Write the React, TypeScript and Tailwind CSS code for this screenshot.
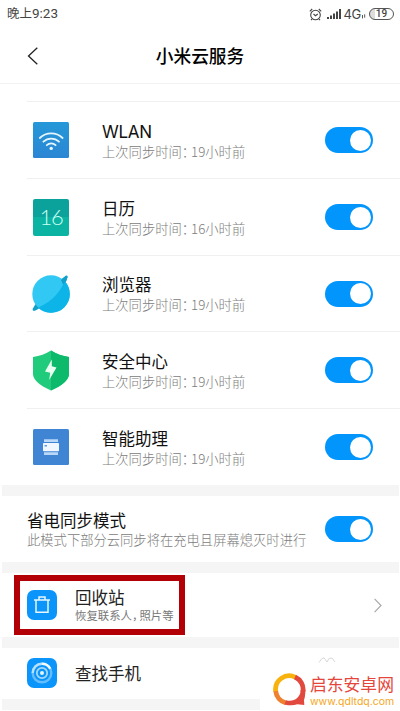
import type { ReactNode } from 'react';

const CJK = "font-['Noto_Sans_CJK_SC',sans-serif]";

function Toggle() {
  return (
    <div className="mr-[27px] flex h-[26px] w-[48px] shrink-0 items-center justify-end rounded-full bg-[#0295fc] pr-[2px]">
      <div className="h-[21px] w-[21px] rounded-full bg-white" />
    </div>
  );
}

function WlanIcon() {
  return (
    <svg width="36" height="36" viewBox="0 0 36 36" fill="none">
      <defs>
        <linearGradient id="wlan" x1="0" y1="0" x2="0" y2="1">
          <stop offset="0" stopColor="#2598d8" />
          <stop offset="1" stopColor="#2b86d4" />
        </linearGradient>
      </defs>
      <rect width="36" height="36" rx="1.5" fill="url(#wlan)" />
      <g stroke="#e6f6ff" strokeWidth="1.8" strokeLinecap="round">
        <path d="M6.800 16a16.500 16.500 0 0 1 22.800 0" />
        <path d="M10.400 19.700a11.200 11.200 0 0 1 15.600 0" />
        <path d="M13.800 23.200a6.400 6.400 0 0 1 8.800 0" />
      </g>
      <circle cx="18.200" cy="26.400" r="1.700" fill="#e6f6ff" />
    </svg>
  );
}

function CalendarIcon() {
  return (
    <div className="flex h-[37px] w-[36px] items-center justify-center rounded-[2px] bg-linear-to-b from-[#0aa29a] from-50% to-[#0bb3a2] to-50%">
      <span className="font-['Lato',sans-serif] text-[22px] leading-none font-light tracking-[-1.2px] text-[#c8fff5]">16</span>
    </div>
  );
}

function BrowserIcon() {
  return (
    <svg width="38" height="38" viewBox="0 0 38 38">
      <path d="M29 4.500 34 .6Q35.800 0 35.600 2 35 6 32 10ZM3.500 29 .6 34Q.2 36.300 3 35.600 6 34.500 8 32.500Z" fill="#0fa3cf" />
      <circle cx="19" cy="19" r="18.700" fill="#32c8f4" />
      <path d="M32.300 5.700A18.700 18.700 0 0 1 6 32.400Q17 28 24 20T32.300 5.700Z" fill="#0cb4e8" />
      <path d="M29 5 34 1.200Q35.800.4 35.400 2.500 34.500 6 31 9.500ZM3.800 30.200 1 34.500Q.8 36 3 35.400L6.600 33.300Z" fill="#139fc9" />
    </svg>
  );
}

function SecurityIcon() {
  return (
    <svg width="36" height="41" viewBox="0 0 36 41">
      <path d="M18 .5Q26 5.500 36 7v17.500Q35 33 18 40.500 1 33 0 24.500V7Q10 5.500 18 .5Z" fill="#20cc7c" />
      <path d="M18 .5Q26 5.500 36 7v17.500Q35 33 18 40.500Z" fill="#0dba6c" />
      <path d="M18.800 9.500 12 21.500l5.200 1.200-1 7.300 7.300-12.500-4.700-1.200Z" fill="#e9fff1" />
    </svg>
  );
}

function AssistantIcon() {
  return (
    <svg width="36" height="36" viewBox="0 0 36 36">
      <rect width="36" height="36" rx="1.500" fill="#4084d4" />
      <path d="M11 10.300h14v2.600H11zM11 23.300h14v2.600H11z" fill="#b9d8f7" />
      <rect x="10" y="14" width="16" height="8.200" rx=".8" fill="#f0f7ff" />
      <path d="M11.500 16.200h2.500v1.200h-2.500z" fill="#4084d4" />
    </svg>
  );
}

function SyncTime({ hours }: { hours: string }) {
  return (
    <div className="mt-[1px] text-[13.3px] leading-[18px] font-light text-[#7c7c7c]">
      上次同步时间<span className="tracking-[-4px]">：</span>{hours}小时前
    </div>
  );
}

interface AppRow {
  title: string;
  hours: string;
  icon: ReactNode;
  height: string;
}

const rows: AppRow[] = [
  { title: 'WLAN', hours: '19', icon: <WlanIcon />, height: 'h-[77px]' },
  { title: '日历', hours: '16', icon: <CalendarIcon />, height: 'h-[77px]' },
  { title: '浏览器', hours: '19', icon: <BrowserIcon />, height: 'h-[76px]' },
  { title: '安全中心', hours: '19', icon: <SecurityIcon />, height: 'h-[77px]' },
  { title: '智能助理', hours: '19', icon: <AssistantIcon />, height: 'h-[77px]' },
];

function StatusBar() {
  return (
    <div className="flex h-[28px] items-center justify-between pr-[6px] pl-[7px] text-[#444]">
      <div className="text-[12.5px] leading-none">
        晚上<span className="font-['Roboto',sans-serif] text-[13.500px]">9:23</span>
      </div>
      <div className="flex items-center">
        <svg width="13" height="13" viewBox="0 0 13 13" fill="none" stroke="#444" strokeWidth="1.1">
          <circle cx="6.500" cy="7" r="4.800" />
          <path d="M.8 3.300 3.200 1M12.200 3.300 9.800 1M4.500 6l2 1.700L8.800 6M3 11l-1 1.200M10 11l1 1.200" />
        </svg>
        <svg className="ml-[5px]" width="14" height="11" viewBox="0 0 14 11" fill="#444">
          <path d="M0 8h2v2H0zM3 6.500h2V10H3zM6 4.500h2V10H6zM9 2.500h2V10H9zM12 0h2v10h-2z" />
        </svg>
        <span className="ml-[3px] font-['Inter',sans-serif] text-[13px] leading-none tracking-[-0.3px]">4G</span>
        <svg className="mt-[5px]" width="5" height="5" viewBox="0 0 5 5" stroke="#555" strokeWidth="1">
          <path d="M1.500 1v3.400M3.700.3v3.400" />
        </svg>
        <div className="ml-[3px] flex h-[12px] w-[25px] items-center justify-center rounded-full border border-[#555] bg-linear-to-r from-[#ddd] from-20% to-white to-20%">
          <span className="font-['Roboto',sans-serif] text-[10px] leading-none font-medium">19</span>
        </div>
      </div>
    </div>
  );
}

function Band() {
  return <div className="mr-[1px] ml-[2px] h-[11px] shrink-0 bg-[#f5f5f5]" />;
}

export default function App() {
  return (
    <div className={`${CJK} relative flex h-[711px] w-[400px] flex-col overflow-hidden bg-white text-[#111]`}>
      <StatusBar />
      <header className="flex h-[56px] shrink-0 items-center border-b border-[#f3f3f3]">
        <svg className="ml-[27px]" width="12" height="18" viewBox="0 0 12 18" fill="none" stroke="#222" strokeWidth="1.300">
          <path d="M10.300.8 1.500 9l8.800 8.200" />
        </svg>
        <h1 className="mr-[39px] flex-1 text-center text-[17.700px] leading-none font-medium text-black">小米云服务</h1>
      </header>

      <div className="mt-[17px] ml-[27px] shrink-0">
        {rows.map((row) => (
          <div key={row.title} className={`${row.height} flex shrink-0 items-center border-t border-[#f0f0f0]`}>
            <div className="ml-[4px] flex w-[40px] justify-center">{row.icon}</div>
            <div className="ml-[31px] flex-1 pt-[1px]">
              <div className={row.title === 'WLAN' ? "pt-[2px] font-['Inter',sans-serif] text-[17px] leading-[19px] tracking-[-0.3px]" : 'text-[16.500px] leading-[21px]'}>
                {row.title}
              </div>
              <SyncTime hours={row.hours} />
            </div>
            <Toggle />
          </div>
        ))}
      </div>

      <Band />
      <section className="flex h-[66px] shrink-0 items-center pl-[27px]">
        <div className="flex-1 whitespace-nowrap pt-[1px]">
          <div className="text-[16.500px] leading-[21px]">省电同步模式</div>
          <div className="text-[13.300px] leading-[18px] font-light text-[#7c7c7c]">此模式下部分云同步将在充电且屏幕熄灭时进行</div>
        </div>
        <Toggle />
      </section>
      <Band />

      <section className="flex h-[64px] shrink-0 items-center pl-[14px]">
        <div className="flex h-[60px] w-[171px] items-center border-[6px] border-[#b30006] pl-[7px]">
          <svg className="-mt-[1px]" width="30" height="30" viewBox="0 0 30 30" fill="none" stroke="#e8f6ff" strokeWidth="1.500">
            <rect width="30" height="30" rx="7" fill="#0b95fb" stroke="none" />
            <path d="M7 10h16M9 10v12.300h12V10M12 9.500V7h6v2.500" />
          </svg>
          <div className="ml-[18px] whitespace-nowrap">
            <div className="text-[16.500px] leading-[20px] text-[#222]">回收站</div>
            <div className="text-[11.400px] leading-[16px] text-[#777]">
              恢复联系人<span className="tracking-[-4px]">，</span>照片等
            </div>
          </div>
        </div>
        <svg className="ml-[189px]" width="8" height="15" viewBox="0 0 8 15" fill="none" stroke="#aaa" strokeWidth="1.200">
          <path d="M.6.8 7 7.500.6 14.200" />
        </svg>
      </section>
      <Band />

      <section className="flex h-[51px] shrink-0 items-center pl-[27px]">
        <svg className="-mt-[1px]" width="30" height="30" viewBox="0 0 30 30" fill="none">
          <rect width="30" height="30" rx="7" fill="#0b95fb" />
          <circle cx="15" cy="15" r="9.300" stroke="#65bdfd" strokeWidth="2.400" />
          <path d="M15 5.700a9.300 9.300 0 0 1 8.300 5" stroke="#f2faff" strokeWidth="2.400" />
          <path d="M5.700 15a9.300 9.300 0 0 1 9.300-9.300" stroke="#b7e1ff" strokeWidth="2.400" />
          <circle cx="15" cy="15" r="5.200" stroke="#a3d8ff" strokeWidth="1.800" />
          <circle cx="15" cy="15" r="2" fill="#e6f5ff" />
        </svg>
        <div className="ml-[18px] text-[16.500px] leading-none text-[#222]">查找手机</div>
      </section>
      <Band />

      {/* Site mark laid over the bottom corner of the page */}
      <div className="absolute right-0 bottom-0 flex h-[54px] w-[140px] flex-col bg-white">
        <svg className="ml-[58px] shrink-0" width="18" height="7" viewBox="0 0 18 7" fill="none" stroke="#d8d8d8" strokeWidth="1">
          <path d="M1 5.500 3.500 2 6 .8 9 5l2-3.500 3-.5 3 4" />
        </svg>
        <div className="mt-[9px] flex">
          <svg className="ml-[13px] shrink-0" width="33" height="34" viewBox="0 0 33 34" fill="none">
            <path d="M2.700 18.500A13.700 13.700 0 0 1 22.500 4.300" stroke="#f8b20e" strokeWidth="4.800" />
            <path d="M2.700 18A13.700 13.700 0 0 0 13 30" stroke="#ef8030" strokeWidth="4.800" />
            <path d="M22 4A13.700 13.700 0 0 1 30 18.500" stroke="#e2493e" strokeWidth="4.800" />
            <path d="M32.400 17Q32.300 24 31 27l.3 4.900-7-.6Q19 33.300 11.500 31.500L13 27.200Q19 28.700 23 26 27.600 22.500 27.600 17Z" fill="#e2493e" />
          </svg>
          <div className="ml-[4px] whitespace-nowrap">
            <div className="text-[16.800px] leading-[23px] text-[#e5463b]">启东安卓网</div>
            <div className="font-['Inter',sans-serif] text-[10.500px] leading-[12px] text-[#f5a623]">www.qdltdq.com</div>
          </div>
        </div>
      </div>
    </div>
  );
}
